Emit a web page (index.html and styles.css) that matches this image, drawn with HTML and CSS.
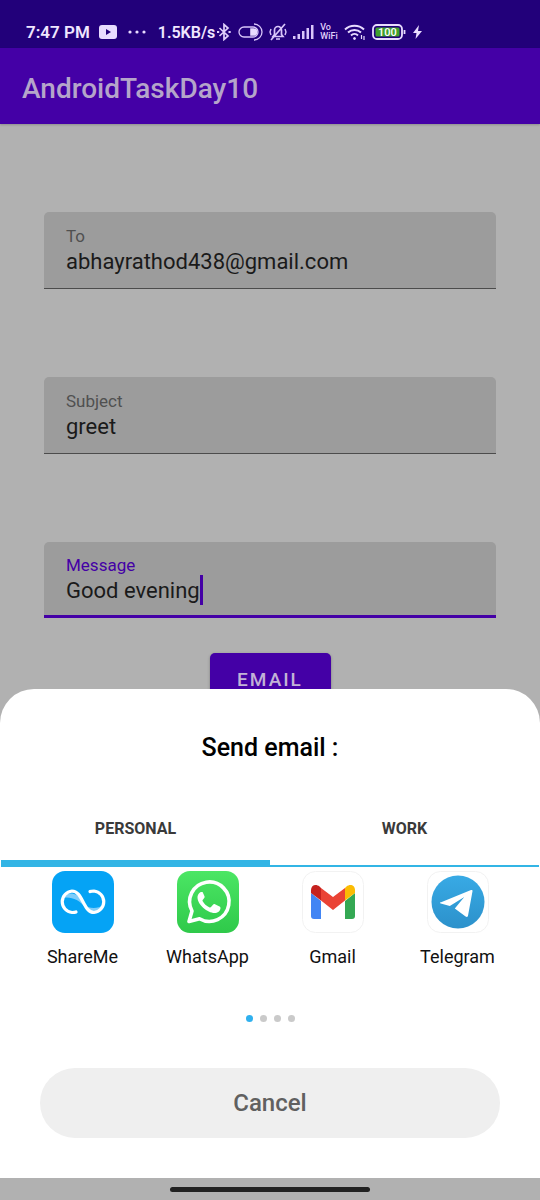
FILE: index.html
```html
<!DOCTYPE html>
<html lang="en">
<head>
<meta charset="utf-8">
<meta name="viewport" content="width=device-width, initial-scale=1">
<title>AndroidTaskDay10</title>
<link rel="stylesheet" href="styles.css">
</head>
<body>
<div class="screen">
  <div class="status-bar">
    <span class="status-time">7:47 PM</span>
    <svg class="status-video" width="18" height="14" viewBox="0 0 18 14"><rect width="18" height="14" rx="3" fill="#e9dcff"/><path d="M7 4l5 3-5 3z" fill="#22007a"/></svg>
    <svg class="status-more" width="18" height="4" viewBox="0 0 18 4" fill="#e9dcff"><circle cx="2" cy="2" r="1.600"/><circle cx="9" cy="2" r="1.600"/><circle cx="16" cy="2" r="1.600"/></svg>
    <span class="status-speed">1.5KB/s</span>
    <div class="status-icons">
      <svg width="16" height="18" viewBox="0 0 16 18" fill="none" stroke="#e0d0fb" stroke-width="1.700"><path d="M3.500 5l8.500 8-4 3.500v-15L12 5l-8.500 8"/><path d="M1 9h2.200M12.500 9h2.200" stroke-width="2"/></svg>
      <svg width="25" height="18" viewBox="0 0 25 18" fill="none" stroke="#d9c6fa" stroke-width="1.300"><path d="M15 14H6A5 5 0 0 1 6 4h9"/><path d="M15 4a5 5 0 0 1 0 10M16 1a8 8 0 0 1 0 16"/><path d="M13 6h2.500a3 3 0 0 1 0 6H13z" fill="#e9dcff" stroke="#e9dcff" stroke-width="1.600"/></svg>
      <svg width="18" height="18" viewBox="0 0 18 18" fill="none" stroke="#d9c6fa" stroke-width="1.700"><path d="M4 13.500l1.500-2V7a3.500 3.500 0 0 1 7 0v4.500l1.500 2zM7 16h4M16 1L2 17"/><path d="M2 6L1 9l1 3M16 6l1 3-1 3" stroke-width="1.400"/></svg>
      <svg width="21" height="16" viewBox="0 0 21 16" fill="#d9c6fa"><path d="M0 12h2.500v3H0zM4.500 10H7v5H4.500zM9 7h2.500v8H9zM13.500 4H16v11h-2.500zM18 1h2.500v14H18z"/></svg>
      <span class="vowifi">Vo<br>WiFi</span>
      <svg width="22" height="18" viewBox="0 0 22 18" fill="none" stroke="#e9dcff" stroke-width="2"><path d="M1 6.500a14 14 0 0 1 19 0M4 9.500a9.500 9.500 0 0 1 13 0M7 12.500a5 5 0 0 1 7 0"/><circle cx="10.500" cy="15.500" r="1" fill="#e9dcff" stroke-width="1"/><path d="M17.500 12v4M20 13v4" stroke-width="1.200"/></svg>
      <svg width="34" height="16" viewBox="0 0 34 16"><rect x="1" y="1" width="29" height="14" rx="4" fill="#22007a" stroke="#e9dcff" stroke-width="1.800"/><rect x="3.500" y="3.500" width="24" height="9" rx="1.500" fill="#3fa02c"/><path d="M32.500 6v4" stroke="#e9dcff" stroke-width="1.800"/><text x="15.500" y="12" class="battery-text" text-anchor="middle">100</text></svg>
      <svg width="11" height="16" viewBox="0 0 11 16" fill="#e9dcff"><path d="M7 1L1 9h3.500L3.500 15 10 7H6z"/></svg>
    </div>
  </div>
  <header class="app-bar"><h1 class="app-title">AndroidTaskDay10</h1></header>
  <main class="form">
    <div class="field">
      <label class="field-label" for="to">To</label>
      <div class="field-row"><input class="field-input" id="to" type="email" value="abhayrathod438@gmail.com"></div>
    </div>
    <div class="field">
      <label class="field-label" for="subject">Subject</label>
      <div class="field-row"><input class="field-input" id="subject" type="text" value="greet"></div>
    </div>
    <div class="field field-active">
      <label class="field-label" for="message">Message</label>
      <div class="field-row"><input class="field-input" id="message" type="text" value="Good evening"><span class="caret"></span></div>
    </div>
    <button class="email-button" type="button">EMAIL</button>
  </main>

  <div class="overlay">
    <section class="sheet" aria-labelledby="sheet-title">
      <h2 class="sheet-title" id="sheet-title">Send email :</h2>
      <div class="tabs" role="tablist">
        <button class="tab tab-selected" type="button" role="tab" aria-selected="true">PERSONAL</button>
        <button class="tab" type="button" role="tab" aria-selected="false">WORK</button>
      </div>
      <div class="apps">
        <button class="app" type="button">
          <svg class="app-icon" viewBox="0 0 62 62"><rect width="62" height="62" rx="13" fill="#05a3f5"/><path d="M10 27c2-5 15-8 21 4l3 6c-7-9-16-12-24-10zM31 33c6 5 14 5 21 1-3 8-14 9-18 4z" fill="#7fcdfa"/><path d="M24 41c-1 .5-2.500.5-4 .5A10.800 10.800 0 0 1 20 20C31 20 31 41.500 42 41.500A10.800 10.800 0 0 0 42 20c-1.500 0-3 0-4 .5" fill="none" stroke="#fff" stroke-width="3.200" stroke-linecap="round"/></svg>
          <span>ShareMe</span>
        </button>
        <button class="app" type="button">
          <svg class="app-icon" viewBox="0 0 62 62"><defs><linearGradient id="wa" x2="0" y2="1"><stop stop-color="#4be664"/><stop offset="1" stop-color="#2fc94a"/></linearGradient></defs><rect width="62" height="62" rx="13" fill="url(#wa)"/><path d="M12 50.500l3-10.500A19.700 19.700 0 1 1 22.500 47.700z" fill="none" stroke="#fff" stroke-width="3.600" stroke-linejoin="round"/><path d="M24.500 21c-2 0-4 2.500-4 5.500 0 7 10 15.500 17 15.500 3 0 6-2 6-5 0-1-.5-1.300-1.500-1.800l-4-2c-1-.4-1.500-.2-2 .5l-2 2.300c-.5.600-1 .6-1.800.2-3-1.500-5-3.500-6.500-6-.4-.7-.2-1 .2-1.500l1.500-2c.3-.5.300-1 .1-1.500l-1.800-4c-.3-.5-.7-.2-1.200-.2z" fill="#fff"/></svg>
          <span>WhatsApp</span>
        </button>
        <button class="app" type="button">
          <svg class="app-icon" viewBox="0 0 62 62"><rect x=".5" y=".5" width="61" height="61" rx="13" fill="#fff" stroke="#f2f2f2"/><path d="M9 22l10 8v18h-7a3 3 0 0 1-3-3z" fill="#4285f4"/><path d="M43 30l10-8v23a3 3 0 0 1-3 3h-7z" fill="#34a853"/><path d="M19 17l12 9 12-9v12.500l-12 9.500-12-9.500z" fill="#ea4335"/><path d="M9 19c0-5 5-6.500 8.500-3.500L19 17v12.500L9 22z" fill="#c5221f"/><path d="M43 17l1.500-1.500C48 12.500 53 14 53 19v3l-10 7.500z" fill="#fbbc04"/></svg>
          <span>Gmail</span>
        </button>
        <button class="app" type="button">
          <svg class="app-icon" viewBox="0 0 62 62"><defs><linearGradient id="tg" x2="0" y2="1"><stop stop-color="#38aae5"/><stop offset="1" stop-color="#2c91cb"/></linearGradient></defs><rect x=".5" y=".5" width="61" height="61" rx="13" fill="#fff" stroke="#f2f2f2"/><circle cx="31" cy="31" r="26.500" fill="url(#tg)"/><path d="M13.500 31.500l30.500-12.500c1-.3 1.700.2 1.500 1.200l-4.500 24.500c-.3 1.300-1.400 1.500-2.400.8l-10.800-8 9.500-11.500-14.500 9-9-2.500c-1-.4-1-1-.3-1.500z" fill="#fff"/></svg>
          <span>Telegram</span>
        </button>
      </div>
      <div class="pager"><span class="dot dot-current"></span><span class="dot"></span><span class="dot"></span><span class="dot"></span></div>
      <button class="cancel" type="button">Cancel</button>
    </section>
    <div class="nav-bar"><span class="nav-handle"></span></div>
  </div>
</div>
</body>
</html>
```

FILE: styles.css
```css
* { box-sizing: border-box; }
body { margin: 0; font-family: Roboto, sans-serif; background: #b1b1b1; }
button, input { font-family: inherit; border: 0; padding: 0; background: none; }
svg { display: block; flex: none; }
h1, h2 { margin: 0; font-weight: 500; }

.screen { position: relative; min-height: 100vh; overflow: hidden; }

.status-bar {
  display: flex;
  align-items: center;
  height: 48px;
  padding: 16px 26px 0;
  background: #22007a;
  color: #f0e6ff;
  font-size: 17px;
  font-weight: 500;
  white-space: nowrap;
}
.status-time { font-weight: 600; }
.status-speed { font-size: 16px; font-weight: 600; }
.status-video { margin-left: 9px; }
.status-more { margin: 0 12px 0 11px; }
.status-icons { display: flex; align-items: center; gap: 6px; margin-left: 1px; }
.vowifi { font-size: 9px; line-height: 9px; color: #e0d0fb; }
.battery-text { font-size: 11px; font-weight: 500; fill: #fff; }

.app-bar {
  display: flex;
  align-items: center;
  height: 76px;
  padding: 4px 22px 0;
  background: #4400a6;
  box-shadow: 0 1px 2px rgba(0, 0, 0, 0.2);
}
.app-title { font-size: 28px; color: #b5a5ca; }

.form {
  display: flex;
  flex-direction: column;
  align-items: center;
  padding: 88px 44px 0;
}
.field {
  width: 100%;
  height: 77px;
  margin-bottom: 88px;
  padding: 14px 22px 0;
  background: #9c9c9c;
  border-bottom: 1px solid #4c4c4c;
  border-radius: 5px 5px 0 0;
}
.field-active { height: 76px; margin-bottom: 35px; padding-top: 13px; border-bottom: 3px solid #4400a6; }
.field-label { display: block; font-size: 17px; line-height: 20px; color: #505050; }
.field-active .field-label { color: #4400a6; }
.field-row { display: flex; align-items: center; height: 30px; }
.field-input { width: 100%; height: 30px; font-size: 22px; color: #1a1a1a; outline: 0; }
.field-active .field-input { width: auto; field-sizing: content; }
.caret { width: 3px; height: 30px; background: #4400a6; }

.email-button {
  min-width: 121px;
  height: 52px;
  border-radius: 5px;
  background: #4400a6;
  color: #c2b2d6;
  font-size: 19px;
  font-weight: 500;
  letter-spacing: 2px;
  box-shadow: 0 1px 3px rgba(0, 0, 0, 0.3);
}

.overlay { position: absolute; left: 0; right: 0; bottom: 0; }
.sheet {
  display: flex;
  flex-direction: column;
  padding: 40px 0;
  background: #fff;
  border-radius: 34px 34px 0 0;
}
.sheet-title { font-size: 25px; line-height: 38px; text-align: center; color: #000; }
.tabs { display: flex; margin-top: 22px; padding: 0 1px; }
.tab {
  flex: 1;
  height: 78px;
  padding-top: 2px;
  border-bottom: 2px solid #33b5e5;
  font-size: 16px;
  font-weight: 700;
  color: #3a3a3a;
}
.tab-selected { box-shadow: inset 0 -5px #33b5e5; }
.apps { display: grid; grid-template-columns: repeat(4, 1fr); padding: 4px 20px 0; }
.app {
  display: flex;
  flex-direction: column;
  align-items: center;
  gap: 12px;
  font-size: 18px;
  line-height: 24px;
  color: #111;
}
.app-icon { width: 62px; height: 62px; }
.pager { display: flex; justify-content: center; gap: 7px; margin-top: 46px; }
.dot { width: 7px; height: 7px; border-radius: 50%; background: #cacaca; }
.dot-current { background: #2fb0ee; }
.cancel {
  height: 70px;
  margin: 46px 40px 0;
  border-radius: 35px;
  background: #efefef;
  color: #606060;
  font-size: 24px;
  font-weight: 500;
}
.nav-bar { display: flex; justify-content: center; align-items: center; height: 22px; background: #b1b1b1; }
.nav-handle { width: 200px; height: 5px; border-radius: 3px; background: #222; }
```
